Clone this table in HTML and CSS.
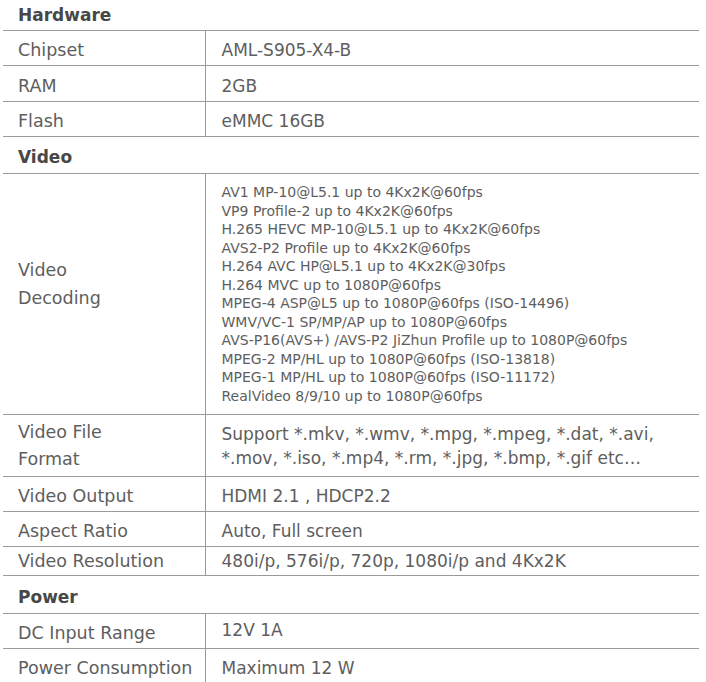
FILE: index.html
```html
<!DOCTYPE html>
<html lang="en">
    <head>
        <meta charset="UTF-8">
        <title>Specifications</title>
        <link rel="stylesheet" href="styles.css">
    </head>
    <body>
        <table class="spec-table">
            <colgroup>
                <col class="col-label">
                <col class="col-value">
            </colgroup>
            <tr class="section"><td colspan="2">Hardware</td></tr>
            <tr class="h35"><td class="label">Chipset</td><td class="value">AML-S905-X4-B</td></tr>
            <tr class="h36"><td class="label">RAM</td><td class="value">2GB</td></tr>
            <tr class="h35"><td class="label">Flash</td><td class="value">eMMC 16GB</td></tr>
            <tr class="section h35"><td colspan="2">Video</td></tr>
            <tr class="decoding">
                <td class="label">Video<br>Decoding</td>
                <td class="value small">
                    AV1 MP-10@L5.1 up to 4Kx2K@60fps<br>
                    VP9 Profile-2 up to 4Kx2K@60fps<br>
                    H.265 HEVC MP-10@L5.1 up to 4Kx2K@60fps<br>
                    AVS2-P2 Profile up to 4Kx2K@60fps<br>
                    H.264 AVC HP@L5.1 up to 4Kx2K@30fps<br>
                    H.264 MVC up to 1080P@60fps<br>
                    MPEG-4 ASP@L5 up to 1080P@60fps (ISO-14496)<br>
                    WMV/VC-1 SP/MP/AP up to 1080P@60fps<br>
                    AVS-P16(AVS+) /AVS-P2 JiZhun Profile up to 1080P@60fps<br>
                    MPEG-2 MP/HL up to 1080P@60fps (ISO-13818)<br>
                    MPEG-1 MP/HL up to 1080P@60fps (ISO-11172)<br>
                    RealVideo 8/9/10 up to 1080P@60fps
                </td>
            </tr>
            <tr class="format">
                <td class="label">Video File<br>Format</td>
                <td class="value">Support *.mkv, *.wmv, *.mpg, *.mpeg, *.dat, *.avi,<br>*.mov, *.iso, *.mp4, *.rm, *.jpg, *.bmp, *.gif etc…</td>
            </tr>
            <tr class="h35"><td class="label">Video Output</td><td class="value">HDMI 2.1 , HDCP2.2</td></tr>
            <tr class="h35"><td class="label">Aspect Ratio</td><td class="value">Auto, Full screen</td></tr>
            <tr class="h29"><td class="label">Video Resolution</td><td class="value">480i/p, 576i/p, 720p, 1080i/p and 4Kx2K</td></tr>
            <tr class="section h36"><td colspan="2">Power</td></tr>
            <tr class="h35 dc"><td class="label">DC Input Range</td><td class="value">12V 1A</td></tr>
            <tr class="last"><td class="label">Power Consumption</td><td class="value">Maximum 12 W</td></tr>
        </table>
    </body>
</html>
```

FILE: styles.css
```css
/* Page */
body {
    margin: 0;
    background-color: #ffffff;
    color: #5e5e5e;
    font-family: 'DejaVu Sans', sans-serif;
}

/* Table des specs */
.spec-table {
    margin-left: 3px;
    width: 696px;
    border-collapse: collapse;
    table-layout: fixed;
}

.col-label { width: 202px; }
.col-value { width: 494px; }

.spec-table td {
    padding: 0;
    vertical-align: middle;
    border-bottom: 1px solid #9a9a9a;
    white-space: nowrap;
}

/* Lignes de section */
.section td {
    height: 30px;
    padding-left: 15px;
    font-weight: bold;
    font-size: 17px;
    color: #474747;
}

.section.h35 td { height: 32px; padding-top: 2px; }
.section.h36 td { height: 33px; padding-top: 2px; }

.label {
    padding-left: 15px !important;
    border-right: 1px solid #9a9a9a;
    font-size: 17.5px;
    line-height: 28px;
}

.value {
    padding-left: 16px !important;
    font-size: 17px;
}

.h35 td { height: 30px; padding-top: 4px !important; }
.h36 td { height: 31px; padding-top: 4px !important; }
.h29 td { height: 28px; }

.dc .value { padding-top: 0 !important; padding-bottom: 3px; height: 31px; }

/* Décodage vidéo */
.decoding .label { height: 220px; padding-bottom: 20px !important; }

.value.small {
    height: 240px;
    font-size: 14px;
    line-height: 18.5px;
}

.format td { height: 61px; }
.format .value { line-height: 24px; }
.format .label { line-height: 27px; }

.spec-table tr.last td {
    border-bottom: none;
    height: 37px;
}
```
